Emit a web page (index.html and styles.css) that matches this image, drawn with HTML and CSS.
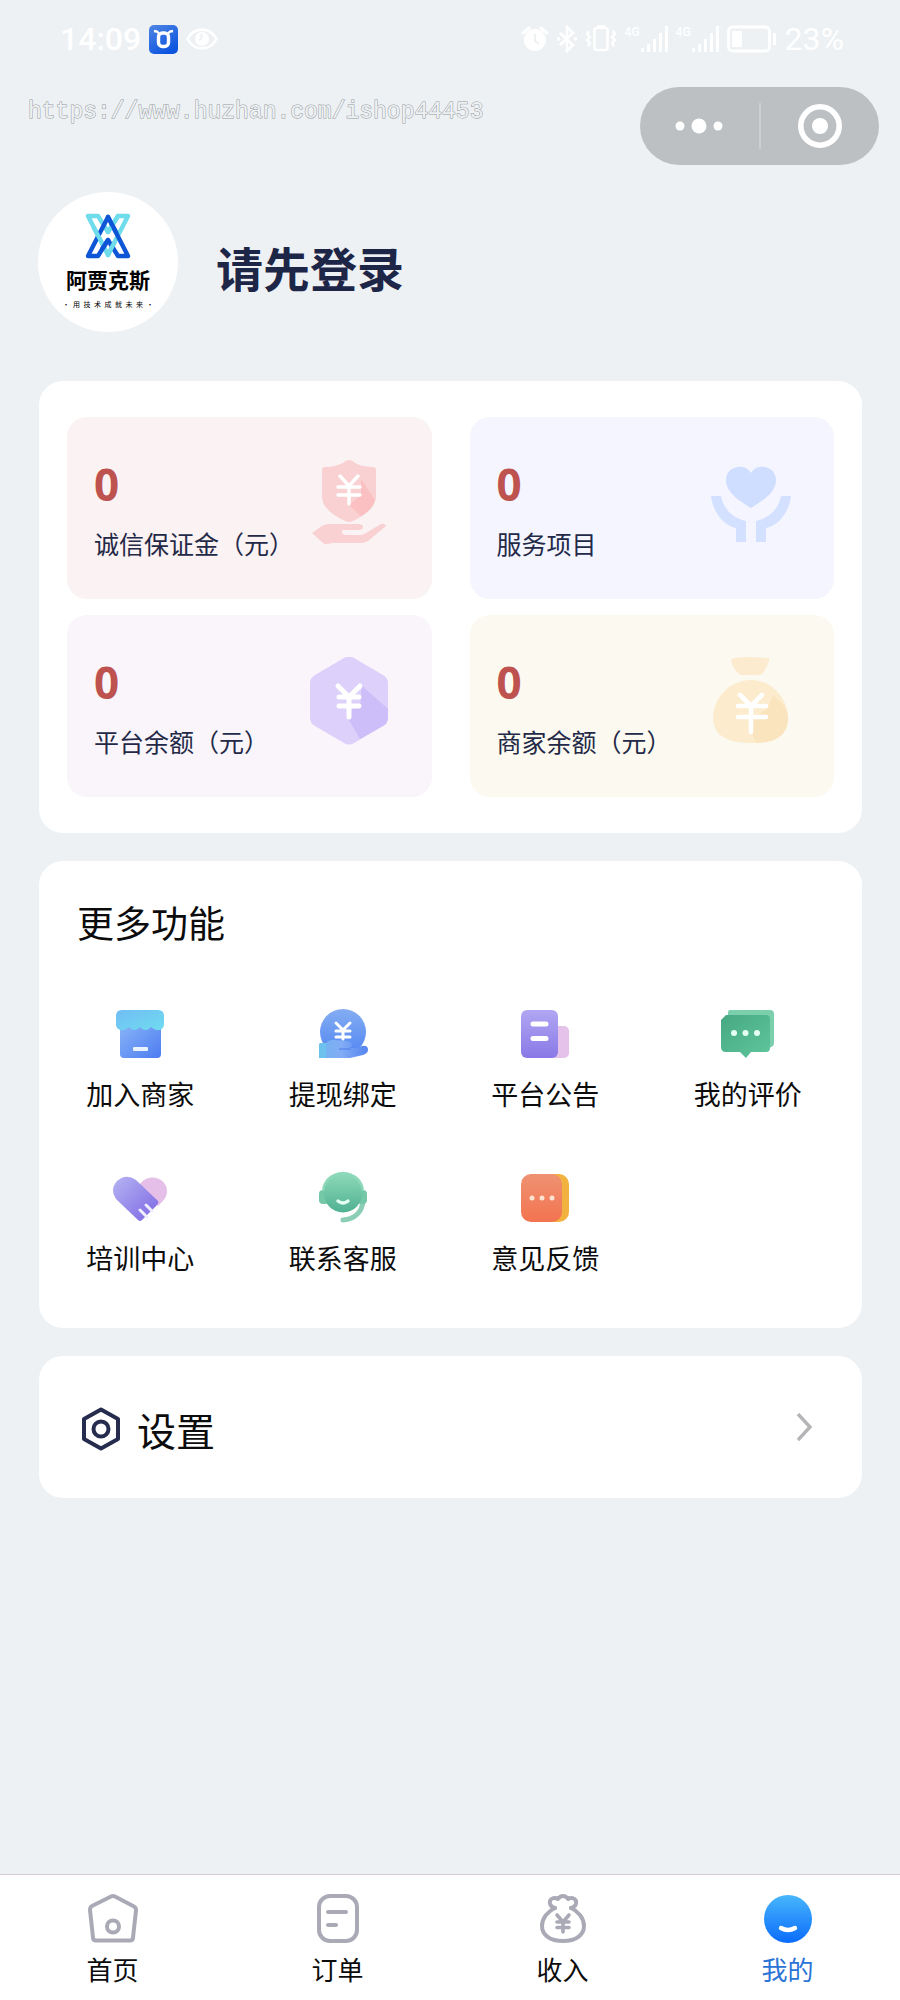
FILE: index.html
```
<!DOCTYPE html>
<html lang="zh-CN">
  <head>
    <meta charset="UTF-8" />
    <meta name="viewport" content="width=device-width, initial-scale=1.0" />
    <title>我的</title>
    <link rel="stylesheet" href="styles.css">
  </head>
  <body>
    <!-- 状态栏 -->
    <div class="status-bar">
      <div class="status-left">
        <span class="clock">14:09</span>
        <svg class="app-badge" width="29" height="29" viewBox="0 0 29 29">
          <defs>
            <linearGradient id="gBadge" x1="0" y1="0" x2="0.6" y2="1">
              <stop offset="0" stop-color="#4f86e4" />
              <stop offset="1" stop-color="#0d55e0" />
            </linearGradient>
          </defs>
          <rect width="29" height="29" rx="5" fill="url(#gBadge)" />
          <path d="M5 6l3 .5 2 2M24 6l-3 .5-2 2" stroke="#fff" stroke-width="2.4" fill="none" />
          <rect x="9.500" y="8" width="10" height="13.500" rx="4" stroke="#fff" stroke-width="3.400" fill="none" />
        </svg>
        <svg width="32" height="22" viewBox="0 0 32 22">
          <path d="M1.500 11C8-1.500 24-1.500 30.500 11 24 23.500 8 23.500 1.500 11z" fill="none" stroke="#fff" stroke-width="2.600" />
          <circle cx="16" cy="11" r="7" fill="#fff" />
          <path d="M15 6a4 4 0 0 1-2 6" stroke="#edf1f4" stroke-width="2" fill="none" />
        </svg>
      </div>
      <div class="status-right">
        <svg width="28" height="28" viewBox="0 0 28 28">
          <circle cx="14" cy="15" r="11" fill="#fff" />
          <path d="M2 8l6-5M26 8l-6-5" stroke="#fff" stroke-width="3" stroke-linecap="round" />
          <path d="M14 9v7l4 3" stroke="#edf1f4" stroke-width="2" fill="none" />
        </svg>
        <svg width="20" height="28" viewBox="0 0 20 28">
          <path d="M3 8l13 12-6 6V2l6 6L3 20" fill="none" stroke="#fff" stroke-width="2.600" />
          <path d="M0 14h3M17 14h3" stroke="#fff" stroke-width="3" />
        </svg>
        <svg width="32" height="28" viewBox="0 0 32 28">
          <rect x="9.500" y="3" width="13" height="22" rx="2" fill="none" stroke="#fff" stroke-width="2.600" />
          <path d="M12 1.500h8M4 6l-2 3 3 3-3 3 3 3-2 3M28 6l2 3-3 3 3 3-3 3 2 3" fill="none" stroke="#fff" stroke-width="2.400" />
        </svg>
        <span class="signal"><small>4G</small>
          <svg width="28" height="26" viewBox="0 0 28 26">
            <path d="M2.500 26v-4M8.500 26v-8M14.500 26V13M20.500 26V7M26.500 26V0" stroke="#fff" stroke-width="3" />
          </svg>
        </span>
        <span class="signal"><small>4G</small>
          <svg width="28" height="26" viewBox="0 0 28 26">
            <path d="M2.500 26v-4M8.500 26v-8M14.500 26V13M20.500 26V7M26.500 26V0" stroke="#fff" stroke-width="3" />
          </svg>
        </span>
        <svg class="battery" width="50" height="28" viewBox="0 0 50 28">
          <rect x="1.500" y="2" width="41" height="24" rx="4" fill="none" stroke="#fff" stroke-width="2.800" />
          <rect x="5" y="6" width="10" height="16" rx="1" fill="#fff" />
          <path d="M47.500 8v12" stroke="#fff" stroke-width="3" />
        </svg>
        <span class="percent">23%</span>
      </div>
    </div>

    <!-- 小程序导航 -->
    <div class="nav-row">
      <span class="site-url">https://www.huzhan.com/ishop44453</span>
      <div class="capsule">
        <button type="button" aria-label="更多">
          <svg width="48" height="46" viewBox="0 0 48 46">
            <circle cx="5" cy="23" r="4.500" />
            <circle cx="24" cy="23" r="7.500" />
            <circle cx="43" cy="23" r="4.500" />
          </svg>
        </button>
        <button type="button" aria-label="关闭">
          <svg width="46" height="46" viewBox="0 0 46 46">
            <circle cx="23" cy="23" r="19.200" fill="none" stroke="#fff" stroke-width="5.600" />
            <circle cx="23" cy="23" r="8" />
          </svg>
        </button>
      </div>
    </div>

    <header class="profile">
      <div class="avatar">
        <svg width="46" height="46" viewBox="0 0 46 46" fill="none" stroke-width="4.400" stroke-linejoin="round" stroke-linecap="round">
          <path d="M23 42L3 3h10l10 16L33 3h10L23 42" stroke="#6fdcec" />
          <path d="M23 4l20 39H33L23 27 13 43H3L23 4" stroke="#0f56d6" />
          <path d="M23 19L33 3M9 15l8 15M29 30l-6 12" stroke="#6fdcec" />
          <path d="M23 4l8 15M23 27l-6 9" stroke="#0f56d6" />
        </svg>
        <b>阿贾克斯</b>
        <small>·&ensp;用&ensp;技&ensp;术&ensp;成&ensp;就&ensp;未&ensp;来&ensp;·</small>
      </div>
      <h1>请先登录</h1>
    </header>

    <main class="container">
      <!-- 账户数据 -->
      <section class="card stats">
        <div class="stat stat-red">
          <div>
            <strong>0</strong>
            <p>诚信保证金（元）</p>
          </div>
          <svg width="90" height="88" viewBox="0 0 90 88">
            <path d="M45 1q3 0 6 3 8 4 18 4 3 0 3 3v26c0 13-13 20-23 25q-4 2-8 0C31 57 18 50 18 37V11q0-3 3-3 10 0 18-4 3-3 6-3z" fill="#f9d1d2" />
            <path d="M57 20l14 21c-2 6-7 12-14 16L45 46l12-10z" fill="#fbc0c1" />
            <path d="M36 17l9 10 9-10M45 27v18M34 28h22M34 36h22" fill="none" stroke="#fff" stroke-width="3.400" stroke-linecap="round" />
            <path d="M8 74l10-7q3-2 7-2h29q5 0 5 3t-5 3H40q-3 0-2 3 1 2 4 2h14q3 0 6-2l15-9q4-1 5 2L64 82q-3 2-7 2H30q-4 0-6 1-3 1-6-2z" fill="#f9d1d2" />
          </svg>
        </div>
        <div class="stat stat-blue">
          <div>
            <strong>0</strong>
            <p>服务项目</p>
          </div>
          <svg width="90" height="88" viewBox="0 0 90 88">
            <path d="M45 49C34 42 20 34 20 21c0-14 19-18 25-7 6-11 25-7 25 7 0 13-14 21-25 28z" fill="#cfddff" />
            <path d="M5 37h10c2 12 11 22 25 25v21H30V69C16 66 7 52 5 37zM85 37H75C73 49 64 59 50 62v21h10V69c14-3 23-17 25-32z" fill="#d3e0ff" />
          </svg>
        </div>
        <div class="stat stat-purple">
          <div>
            <strong>0</strong>
            <p>平台余额（元）</p>
          </div>
          <svg width="90" height="88" viewBox="0 0 90 88">
            <path d="M40 1q5-3 10 0l29 17q5 3 5 8v35q0 5-5 8L50 86q-5 3-10 0L11 69q-5-3-5-8V26q0-5 5-8z" fill="#ddd0fa" />
            <path d="M58 29l26 23v9q0 5-5 8L56 82 45 63V52l11-1z" fill="#cdbdf8" />
            <path d="M34 29l11 11 11-11M45 40v20M35 40h20M35 49h20" fill="none" stroke="#fff" stroke-width="5" stroke-linecap="round" />
          </svg>
        </div>
        <div class="stat stat-yellow">
          <div>
            <strong>0</strong>
            <p>商家余额（元）</p>
          </div>
          <svg width="90" height="88" viewBox="0 0 90 88">
            <path d="M28 1q16-2 33 0 3 0 2 3-2 6-6 12-1 2-4 2H36q-3 0-4-2-5-5-7-12 0-3 3-3z" fill="#fdebd0" />
            <path d="M45 23c22 0 37 20 37 38 0 17-13 25-37 25S7 78 7 61c0-18 15-38 38-38z" fill="#fcebcc" />
            <path d="M67 39c9 5 14 13 15 22 0 17-12 25-32 25l-5-12V62l16-10z" fill="#fae4bd" />
            <path d="M34 38l11 11 11-11M45 49v26M32 49h28M32 60h28" fill="none" stroke="#fff" stroke-width="4.600" stroke-linecap="round" />
          </svg>
        </div>
      </section>

      <!-- 功能入口 -->
      <section class="card features">
        <h2>更多功能</h2>
        <nav class="feature-grid">
          <a href="#">
            <svg width="56" height="56" viewBox="0 0 56 56">
              <defs>
                <linearGradient id="gShop" x1="0" y1="0" x2="1" y2="1">
                  <stop offset="0" stop-color="#8bb6f6" />
                  <stop offset="1" stop-color="#4c7cf2" />
                </linearGradient>
                <linearGradient id="gRoof" x1="0" y1="0" x2="1" y2="1">
                  <stop offset="0" stop-color="#70bdf4" />
                  <stop offset="1" stop-color="#70dcf0" />
                </linearGradient>
              </defs>
              <path d="M8 16h41v32q0 4-4 4H12q-4 0-4-4z" fill="url(#gShop)" />
              <path d="M10 4h36q6 0 6 6v8c0 7-8 8-13 3-3 4-8 4-11 0-3 4-8 4-11 0-5 5-13 4-13-3v-8q0-6 6-6z" fill="url(#gRoof)" />
              <rect x="21" y="41" width="15" height="4" rx="1" fill="#e8f3ff" />
            </svg>
            <span>加入商家</span>
          </a>
          <a href="#">
            <svg width="56" height="56" viewBox="0 0 56 56">
              <defs>
                <linearGradient id="gCoin" x1="0" y1="0" x2="0" y2="1">
                  <stop offset="0" stop-color="#84adf2" />
                  <stop offset="1" stop-color="#5286f2" />
                </linearGradient>
                <linearGradient id="gPalm" x1="0" y1="0" x2="1" y2="0">
                  <stop offset="0" stop-color="#72b3ef" />
                  <stop offset="0.45" stop-color="#82acf5" />
                  <stop offset="1" stop-color="#5585f0" />
                </linearGradient>
              </defs>
              <circle cx="28" cy="26" r="23" fill="url(#gCoin)" />
              <path d="M4 39q0-2 2-2h5q4-4 9-3l13 1q4 1 4 4 0 2-3 3h8l5-2q6-1 6 4 0 3-5 5l-13 3H4z" fill="url(#gPalm)" />
              <path d="M4 39q0-2 2-2h5v15H4z" fill="#6cc2ec" />
              <path d="M24 43h12" stroke="#4c7ce8" stroke-width="1" />
              <path d="M21 17l7 7 7-7M28 24v9M21 25h14M21 31h14" fill="none" stroke="#fff" stroke-width="3" stroke-linecap="round" />
            </svg>
            <span>提现绑定</span>
          </a>
          <a href="#">
            <svg width="56" height="56" viewBox="0 0 56 56">
              <defs>
                <linearGradient id="gNotice" x1="0" y1="0" x2="0" y2="1">
                  <stop offset="0" stop-color="#b0a7f3" />
                  <stop offset="1" stop-color="#8978e6" />
                </linearGradient>
              </defs>
              <rect x="28" y="20" width="24" height="32" rx="5" fill="#e5c2ea" />
              <rect x="4" y="4" width="37" height="48" rx="6" fill="url(#gNotice)" />
              <path d="M16 18h13M16 32.500h13" stroke="#fff" stroke-width="5" stroke-linecap="round" />
            </svg>
            <span>平台公告</span>
          </a>
          <a href="#">
            <svg width="56" height="56" viewBox="0 0 56 56">
              <defs>
                <linearGradient id="gChat" x1="0" y1="0" x2="1" y2="1">
                  <stop offset="0" stop-color="#46a882" />
                  <stop offset="1" stop-color="#5fc69c" />
                </linearGradient>
              </defs>
              <path d="M10 4h40q4 0 4 4v29q0 3-3 4l-7 5H8V7q0-3 2-3z" fill="#7ccfad" />
              <path d="M6 9h40q4 0 4 4v29q0 4-4 4H31l-5 6-6-6H6q-5 0-5-5V14z" fill="url(#gChat)" />
              <g fill="#e4fff4">
                <circle cx="14" cy="27" r="3" />
                <circle cx="25.500" cy="27" r="3" />
                <circle cx="37" cy="27" r="3" />
              </g>
            </svg>
            <span>我的评价</span>
          </a>
          <a href="#">
            <svg width="56" height="56" viewBox="0 0 56 56">
              <defs>
                <linearGradient id="gHeart" x1="0" y1="0" x2="1" y2="1">
                  <stop offset="0" stop-color="#b6b4f3" />
                  <stop offset="1" stop-color="#7c66e2" />
                </linearGradient>
              </defs>
              <path d="M28 14C37 2 55 8 55 21q0 6-5 11l-4 4-22-18z" fill="#e5bfe8" />
              <path d="M5 11Q14 3 24 10l22 21q1 2-1 4L30 50q-2 2-4 0L5 30Q-3 20 5 11z" fill="url(#gHeart)" />
              <path d="M28 40l7 7M34 35l6 6" stroke="#f0edff" stroke-width="3" stroke-linecap="round" />
            </svg>
            <span>培训中心</span>
          </a>
          <a href="#">
            <svg width="56" height="56" viewBox="0 0 56 56">
              <defs>
                <linearGradient id="gService" x1="0" y1="0" x2="0" y2="1">
                  <stop offset="0" stop-color="#8cd8b8" />
                  <stop offset="1" stop-color="#4fb192" />
                </linearGradient>
              </defs>
              <path d="M48 31c-1 11-8 18-20 19" fill="none" stroke="#8bceb5" stroke-width="5" stroke-linecap="round" />
              <rect x="4" y="20" width="10" height="14" rx="4" fill="#74c8a8" />
              <rect x="42" y="20" width="10" height="14" rx="4" fill="#74c8a8" />
              <path d="M7 21a21 19 0 0 1 42 0z" fill="#8cd8b8" />
              <circle cx="28" cy="23.500" r="19" fill="url(#gService)" />
              <path d="M23 31q5 4 10 0" fill="none" stroke="#e6fff5" stroke-width="3.400" stroke-linecap="round" />
            </svg>
            <span>联系客服</span>
          </a>
          <a href="#">
            <svg width="56" height="56" viewBox="0 0 56 56">
              <defs>
                <linearGradient id="gFeedback" x1="0" y1="0" x2="0" y2="1">
                  <stop offset="0" stop-color="#ef9272" />
                  <stop offset="1" stop-color="#f37350" />
                </linearGradient>
              </defs>
              <rect x="12" y="4" width="40" height="48" rx="10" fill="#f2b23f" />
              <rect x="4" y="4" width="41" height="48" rx="10" fill="url(#gFeedback)" />
              <g fill="#ffe2d2">
                <circle cx="15" cy="28" r="2.500" />
                <circle cx="25" cy="28" r="2.500" />
                <circle cx="35" cy="28" r="2.500" />
              </g>
            </svg>
            <span>意见反馈</span>
          </a>
        </nav>
      </section>

      <a href="#" class="card settings">
        <svg width="40" height="46" viewBox="0 0 40 46" fill="none" stroke="#252c4d" stroke-width="4" stroke-linejoin="round">
          <path d="M20 3.500l17 9.500v20L20 42.500 3 33V13z" />
          <circle cx="20" cy="23" r="7.500" />
        </svg>
        <span>设置</span>
        <svg class="arrow" width="20" height="32" viewBox="0 0 20 32">
          <path d="M4 1l12 13L4 27" fill="none" stroke="#b5b5b8" stroke-width="3.400" />
        </svg>
      </a>
    </main>

    <!-- 底部导航 -->
    <nav class="tab-bar">
      <a href="#">
        <svg width="52" height="52" viewBox="0 0 52 52" fill="none" stroke="#a9aab6" stroke-width="4" stroke-linejoin="round">
          <path d="M24 4.500q2-1 4 0l19 10q2 1 2 4l-3 27q0 3-3 3H9q-3 0-3-3L3 18q0-3 2-4z" />
          <circle cx="26" cy="34.500" r="6" />
        </svg>
        <span>首页</span>
      </a>
      <a href="#">
        <svg width="52" height="52" viewBox="0 0 52 52" fill="none" stroke="#a9aab6" stroke-width="4" stroke-linecap="round">
          <rect x="7" y="4" width="38" height="45" rx="11" />
          <path d="M16 20h18M16 33h8" />
        </svg>
        <span>订单</span>
      </a>
      <a href="#">
        <svg width="52" height="52" viewBox="0 0 52 52" fill="none" stroke="#a9aab6" stroke-width="4" stroke-linejoin="round" stroke-linecap="round">
          <path d="M18 16c-7 3-13 10-13 18 0 9 8 15 21 15s21-6 21-15c0-8-6-15-13-18" />
          <path d="M18 16c-4-1-6-4-5-7s5-4 8-2q2-3 5-3t5 3c3-2 7-1 8 2s-1 6-5 7" />
          <path d="M20 23l6 7 6-7M26 30v10M20 30h12M20 35.500h12" stroke-width="3.600" />
        </svg>
        <span>收入</span>
      </a>
      <a href="#" class="active">
        <svg width="52" height="52" viewBox="0 0 52 52">
          <defs>
            <linearGradient id="gMine" x1="0" y1="0" x2="0" y2="1">
              <stop offset="0" stop-color="#48b6fc" />
              <stop offset="1" stop-color="#0a6cfb" />
            </linearGradient>
          </defs>
          <circle cx="26" cy="27" r="24" fill="url(#gMine)" />
          <path d="M19 36q7 4 14 0" fill="none" stroke="#fff" stroke-width="4.400" stroke-linecap="round" />
        </svg>
        <span>我的</span>
      </a>
    </nav>
  </body>
</html>
```
FILE: styles.css
```
* {
  box-sizing: border-box;
}

body {
  font-family: "Noto Sans CJK SC", sans-serif;
  background-color: #edf1f4;
  color: #0c0c0c;
  margin: 0;
  min-height: 100vh;
  display: flex;
  flex-direction: column;
}

svg {
  display: block;
  flex-shrink: 0;
}

a {
  color: inherit;
  text-decoration: none;
}

h1,
h2,
p {
  margin: 0;
}

.status-bar {
  display: flex;
  justify-content: space-between;
  align-items: center;
  height: 78px;
  padding: 0 56px 0 60px;
  color: white;
  font-family: Roboto, sans-serif;
  font-size: 32px;
  font-weight: 500;
}

.status-left,
.status-right {
  display: flex;
  align-items: center;
  gap: 8px;
}

.percent {
  font-weight: 400;
}

.signal {
  display: flex;
  align-items: flex-start;
}

.signal small {
  font-size: 12px;
  line-height: 12px;
}

.nav-row {
  display: flex;
  justify-content: space-between;
  align-items: flex-start;
  padding: 9px 21px 0 28px;
}

.site-url {
  font-family: "Liberation Mono", monospace;
  font-size: 23px;
  line-height: 50px;
  color: #edf1f4;
  -webkit-text-stroke: 1px #96999b;
  paint-order: stroke fill;
}

.capsule {
  display: flex;
  align-items: center;
  width: 239px;
  height: 78px;
  border-radius: 39px;
  background-color: #bcc0c3;
}

.capsule button {
  flex: 1;
  display: flex;
  justify-content: center;
  padding: 0;
  border: none;
  background: none;
  fill: white;
  cursor: pointer;
}

.capsule button + button {
  border-left: 2px solid #cdd0d2;
}

.profile {
  display: flex;
  align-items: center;
  gap: 38px;
  padding: 27px 38px 49px;
}

.profile h1 {
  font-size: 47px;
  line-height: 60px;
  padding-top: 10px;
  color: #1e2647;
}

.avatar {
  display: flex;
  flex-direction: column;
  align-items: center;
  width: 140px;
  height: 140px;
  padding-top: 21px;
  border-radius: 50%;
  background-color: white;
  color: black;
}

.avatar b {
  font-size: 21px;
  line-height: 28px;
  margin-top: 6px;
}

.avatar small {
  font-size: 7px;
  line-height: 12px;
  margin-top: 5px;
  white-space: nowrap;
}

.container {
  display: flex;
  flex-direction: column;
  gap: 28px;
  padding: 0 38px 28px 39px;
}

.card {
  background-color: white;
  border-radius: 24px;
}

.stats {
  display: grid;
  grid-template-columns: 1fr 1fr;
  gap: 16px 38px;
  padding: 36px 28px;
}

.stat {
  display: flex;
  justify-content: space-between;
  align-items: flex-start;
  padding: 42px 38px 38px 27px;
  border-radius: 20px;
  color: #232947;
}

.stat strong {
  display: block;
  font-family: "Noto Sans", sans-serif;
  font-size: 44px;
  line-height: 50px;
  color: #bd524f;
}

.stat p {
  font-size: 25px;
  line-height: 36px;
  margin-top: 16px;
  white-space: nowrap;
}

.stat-red {
  background-color: #fbf2f3;
}

.stat-blue {
  background-color: #f4f5ff;
}

.stat-purple {
  background-color: #f9f5fb;
}

.stat-yellow {
  background-color: #fbf9f0;
}

.features {
  padding: 37px 13px 52px 0;
}

.features h2 {
  font-size: 37px;
  font-weight: 400;
  line-height: 48px;
  padding-left: 38px;
  margin-bottom: 60px;
}

.feature-grid {
  display: grid;
  grid-template-columns: repeat(4, 1fr);
  row-gap: 58px;
}

.feature-grid a {
  display: flex;
  flex-direction: column;
  align-items: center;
  gap: 14px;
  font-size: 27px;
  line-height: 36px;
}

.settings {
  display: flex;
  align-items: center;
  gap: 16px;
  padding: 45px 48px 41px 42px;
  font-size: 39px;
  line-height: 56px;
}

.arrow {
  margin-left: auto;
}

.tab-bar {
  display: flex;
  margin-top: auto;
  padding: 17px 0 13px;
  border-top: 1px solid #d3cdd1;
  background-color: white;
}

.tab-bar a {
  flex: 1;
  display: flex;
  flex-direction: column;
  align-items: center;
  gap: 7px;
  font-size: 26px;
  line-height: 36px;
}

.tab-bar .active {
  color: #2b73d6;
}
```
